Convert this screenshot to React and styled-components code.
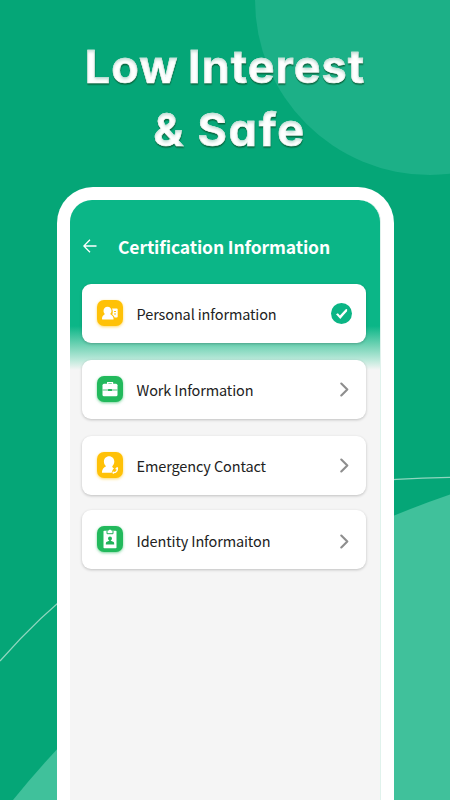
import React from "react";
import styled, { createGlobalStyle } from "styled-components";

const PersonalIcon = () => (
  <svg viewBox="0 0 26 26">
    <path d="M10.500 6.800c2.500 0 4 1.800 4 4 0 1.400-.5 2.500-1.300 3.200.5.700 3.200 1.600 3.400 4.900.1.300-.1.500-.4.500H5.500c-.4 0-.5-.2-.5-.5.1-3.200 2.400-4.100 3-4.800-.9-.8-1.500-1.900-1.500-3.300 0-2.200 1.600-4 4-4z" />
    <path d="M15 8.600h4.800c.6 0 .9.300.9.900v7c0 .6-.3.900-.9.900h-2.200c-.5-1.400-1.500-2.200-2.300-2.900.6-1.200.9-3.500-.3-5.900z" />
    <path d="M17 11.500h2M17 14h2" stroke="#ffc107" strokeWidth="1" />
  </svg>
);

const WorkIcon = () => (
  <svg viewBox="0 0 26 26">
    <path d="M10.700 8V6.700h4.800V8" fill="none" stroke="#fff" strokeWidth="1.300" />
    <rect x="5.500" y="7.700" width="15" height="12.600" rx="1.500" />
    <path d="M5.500 14h15" stroke="#22b35a" strokeWidth=".8" />
    <rect x="11" y="13.100" width="4" height="1.800" rx=".5" fill="#22b35a" />
  </svg>
);

const ContactIcon = () => (
  <svg viewBox="0 0 26 26">
    <path d="M12.100 4.300c3 0 5.200 2.300 5.200 5.200 0 2-.9 3.600-2 4.700-.3.900.8 1.500 1.700 2.100-1.300 1.100-1.900 2.800-2.300 4.500H5.500c-.4 0-.6-.2-.6-.6.100-3.400 2.500-5.100 4.200-5.900-1.400-1.100-2.200-2.800-2.200-4.800 0-2.900 2.200-5.200 5.200-5.200z" />
    <path d="M20.300 16.200c.6 2.400-1.400 4.400-3.600 4.500" fill="none" stroke="#fff" strokeWidth="1.300" strokeLinecap="round" />
    <path d="M19.300 16.700l1-.6M16.300 20.300v.5" stroke="#fff" strokeWidth="1.700" strokeLinecap="round" />
  </svg>
);

const IdentityIcon = () => (
  <svg viewBox="0 0 26 26">
    <rect x="6.500" y="4.800" width="13" height="17.400" rx=".8" />
    <path d="M10 5v2.700h6V5" fill="none" stroke="#22b35a" strokeWidth="1" />
    <rect x="11.600" y="3.800" width="2.800" height="3" rx=".8" />
    <circle cx="13" cy="12.500" r="2" fill="#22b35a" />
    <path d="M12.200 13h1.600v1.800l2.900 1.200c.4.400.5 1.200.5 2.400H8.800c0-1.200.1-2 .5-2.400l2.900-1.200z" fill="#22b35a" />
  </svg>
);

const Check = () => (
  <svg width="21" height="21" viewBox="0 0 21 21">
    <circle cx="10.500" cy="10.500" r="10.500" fill="#0bb585" />
    <path d="M5 11.300l1.900-1.100 2 2.300 5.800-6.300 1.400-.3v2.300c-2 2.200-4.300 4.800-6.800 7.800z" fill="#fff" />
  </svg>
);

const Chevron = () => (
  <svg width="9" height="15" viewBox="0 0 9 15">
    <path d="M1.300 1.500l6 6-6 6" fill="none" stroke="#8e8e8e" strokeWidth="2.100" strokeLinecap="round" strokeLinejoin="round" />
  </svg>
);

const items = [
  { label: "Personal information", icon: <PersonalIcon />, color: "#ffc107", done: true },
  { label: "Work Information", icon: <WorkIcon />, color: "#22b95c" },
  { label: "Emergency Contact", icon: <ContactIcon />, color: "#ffc107" },
  { label: "Identity Informaiton", icon: <IdentityIcon />, color: "#22b95c" },
];

const App = () => {
  return (
    <Page>
      <GlobalStyle />
      <Backdrop viewBox="0 0 450 800">
        <defs>
          <filter id="bevel" x="-5%" y="-10%" width="110%" height="130%" colorInterpolationFilters="sRGB">
            <feOffset in="SourceAlpha" dy="2" result="moved" />
            <feGaussianBlur in="moved" stdDeviation="1.500" result="soft" />
            <feComposite in="SourceAlpha" in2="soft" operator="out" result="rim" />
            <feFlood floodColor="#a5cfc2" floodOpacity=".7" />
            <feComposite in2="rim" operator="in" result="shade" />
            <feDropShadow in="SourceGraphic" dx="0.300" dy="1.500" stdDeviation=".5" floodColor="#0b5a35" floodOpacity=".85" result="base" />
            <feMerge>
              <feMergeNode in="base" />
              <feMergeNode in="shade" />
            </feMerge>
          </filter>
        </defs>
        <circle cx="430" cy="0" r="175" fill="#1cb087" />
        <path d="M13 800A961 961 0 0 1 450 494.500V800z" fill="#40c19b" />
        <path d="M0 661C103 544 225 480 450 477.300" fill="none" stroke="#8fd6bf" strokeWidth="1.200" />
      </Backdrop>
      <Headline>
        <Line>Low Interest</Line>
        <Line $second>&amp; Safe</Line>
      </Headline>
      <Phone>
        <Screen>
          <Header>
            <svg width="14" height="14" viewBox="0 0 14 14">
              <path d="M13.500 7H1M7 .8L.8 7 7 13.200" fill="none" stroke="#fff" strokeWidth="1.300" />
            </svg>
            <h2>Certification Information</h2>
          </Header>
          <List>
            {items.map((item) => (
              <Row key={item.label}>
                <Badge $color={item.color}>{item.icon}</Badge>
                <Label>{item.label}</Label>
                <Status $done={item.done}>{item.done ? <Check /> : <Chevron />}</Status>
              </Row>
            ))}
          </List>
        </Screen>
      </Phone>
    </Page>
  );
};

const GlobalStyle = createGlobalStyle`
  body {
    margin: 0;
  }
  * {
    box-sizing: border-box;
  }
`;

const Page = styled.div`
  position: relative;
  display: flex;
  flex-direction: column;
  align-items: center;
  width: 450px;
  height: 800px;
  overflow: hidden;
  background: #05a677;
  font-family: "Noto Sans CJK SC", "Noto Sans", sans-serif;
`;

const Backdrop = styled.svg`
  position: absolute;
  inset: 0;
  width: 450px;
  height: 800px;
`;

const Headline = styled.h1`
  z-index: 1;
  flex: none;
  height: 187px;
  margin: 0;
  padding-top: 35px;
  color: #fff;
  font-family: Inter, "Liberation Sans", sans-serif;
  font-feature-settings: "cv11";
  font-size: 45px;
  font-weight: 700;
  line-height: 63px;
  text-align: center;
  white-space: nowrap;
  -webkit-text-stroke: 0.6px #fff;
  filter: url(#bevel);
`;

const Line = styled.div`
  letter-spacing: ${(props) => (props.$second ? "1.7px" : "1px")};
  word-spacing: ${(props) => (props.$second ? "0" : "-2px")};
  padding-left: ${(props) => (props.$second ? "9px" : "0")};
`;

const Phone = styled.div`
  z-index: 1;
  flex: 1;
  width: 337px;
  padding: 13px 13px 0;
  border-radius: 36px 36px 0 0;
  background: #fff;
`;

const Screen = styled.div`
  height: 100%;
  border-right: 1px solid #e0f2ec;
  border-radius: 22px 22px 0 0;
  background: linear-gradient(#0bb687 0, #0bb687 126px, #6fd2b4 145px, #bce9da 160px, #f5f5f5 170px);
`;

const Header = styled.div`
  display: flex;
  align-items: center;
  height: 84px;
  padding: 8px 0 0 13px;
  h2 {
    margin: 1px 0 0 21.5px;
    color: #fff;
    font-size: 17.5px;
    font-weight: 700;
    line-height: 27px;
    letter-spacing: -0.13px;
    white-space: nowrap;
  }
`;

const List = styled.div`
  display: flex;
  flex-direction: column;
  gap: 17px;
  padding: 0 13.5px 0 12.6px;
`;

const Label = styled.span`
  flex: 1;
  margin-left: 14px;
  color: #222;
  font-size: 14.5px;
  line-height: 22px;
  letter-spacing: -0.13px;
  white-space: nowrap;
`;

const Status = styled.div`
  display: flex;
  margin-right: ${(props) => (props.$done ? "0" : "3px")};
`;

const Row = styled.div`
  display: flex;
  align-items: center;
  height: 59px;
  padding: 0 14px 0 14.5px;
  border-radius: 9px;
  background: #fff;
  box-shadow: 0 1px 3px rgba(0, 0, 0, 0.22);
  &:last-child {
    margin-top: -2px;
    ${Label}, ${Status} {
      padding-top: 3px;
    }
  }
`;

const Badge = styled.div`
  width: 26px;
  height: 26px;
  margin-top: -1px;
  border-radius: 7px;
  background: ${(props) => props.$color};
  box-shadow: 0 1px 3px ${(props) => props.$color}99;
  svg {
    display: block;
    fill: #fff;
  }
`;

export default App;
